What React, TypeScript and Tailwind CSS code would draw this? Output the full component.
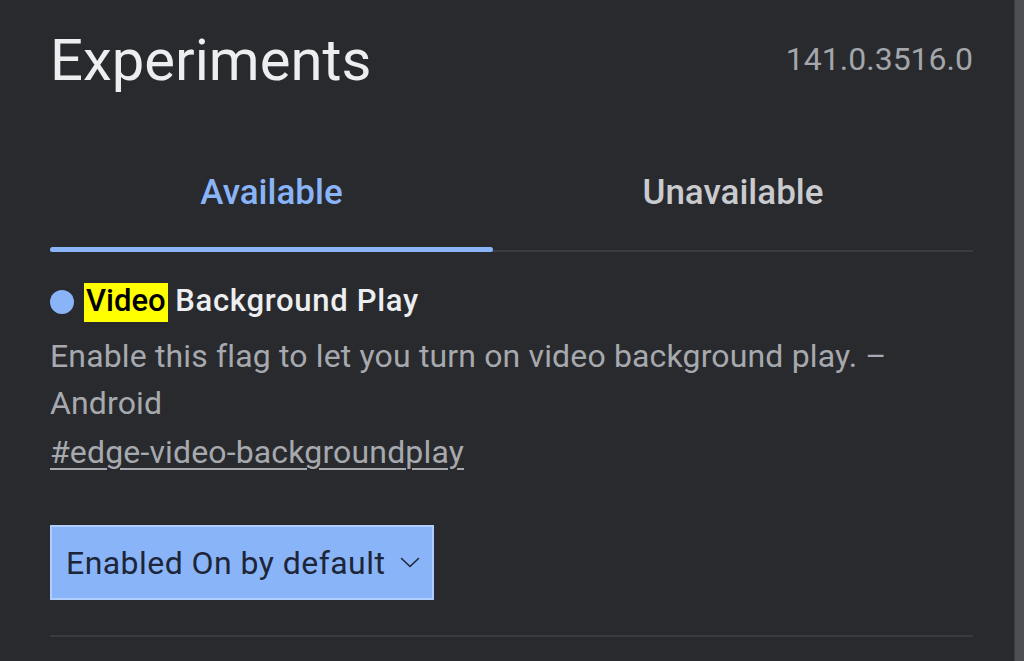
import React from 'react';

function Chevron() {
  return (
    <svg className="w-[20px] h-[11px]" viewBox="0 0 20 11" fill="none" stroke="currentColor">
      <path d="M1.5 1.5l8.5 8 8.5-8" strokeWidth={1.6} strokeLinecap="round" strokeLinejoin="round" />
    </svg>
  );
}

export default function App() {
  return (
    <div className="flex h-[661px] w-[1024px] overflow-hidden bg-[#292a2e] font-['Roboto',sans-serif]">
      <div className="ml-[50px] w-[923px] flex flex-col">
        <div className="flex items-start justify-between pt-[31px]">
          <h1 className="text-[58px] leading-none text-[#eceef0]">Experiments</h1>
          <span className="mt-[12px] text-[32px] leading-none text-[#a3a6ab]">141.0.3516.0</span>
        </div>

        <div className="mt-[86px] flex border-b-2 border-[#3a3b3f]">
          <div className="w-[443px] flex flex-col items-center">
            <span className="text-[35px] leading-[35px] font-medium text-[#8ab4f8]">Available</span>
            <div className="mt-[37px] -mb-[2px] h-[5px] w-full rounded-full bg-[#8ab4f8]" />
          </div>
          <div className="flex-1 flex justify-center">
            <span className="text-[35px] leading-[35px] font-medium text-[#c9cbcf]">Unavailable</span>
          </div>
        </div>

        <div className="mt-[29px] flex items-center">
          <span className="w-[24px] h-[24px] rounded-full bg-[#8ab4f8] shrink-0" />
          <span className="ml-[10px] text-[31px] leading-[39px] font-medium text-[#eceef0]">
            <span className="inline-block bg-[#ffff00] text-black leading-[35px] px-[2px] pb-[4px]">Video</span>{' '}
            <span className="tracking-[0.7px]">Background Play</span>
          </span>
        </div>

        <p className="mt-[11px] text-[32px] leading-[47px] tracking-[0.15px] text-[#a6a9ae]">
          Enable this flag to let you turn on video background play. –
          <br />
          Android
        </p>
        <a href="#edge-video-backgroundplay" className="mt-[2px] self-start text-[32px] leading-[47px] tracking-[0.15px] text-[#a6a9ae] underline underline-offset-[5px] decoration-[1.5px]">
          #edge-video-backgroundplay
        </a>

        <div className="mt-[49px] self-start flex items-center h-[75px] w-[384px] pl-[14px] pr-[12px] bg-[#8ab4f8] border-2 border-[#b0cdfb] text-[#1c2638]">
          <span className="text-[32px] leading-none tracking-[0.45px]">Enabled On by default</span>
          <span className="ml-auto"><Chevron /></span>
        </div>

        <div className="mt-[35px] h-[2px] w-full bg-[#3a3b3f]" />
      </div>
      <div className="ml-auto w-[10px] h-full bg-[#4d4e52] border-l border-[#3e3f43]" />
    </div>
  );
}
